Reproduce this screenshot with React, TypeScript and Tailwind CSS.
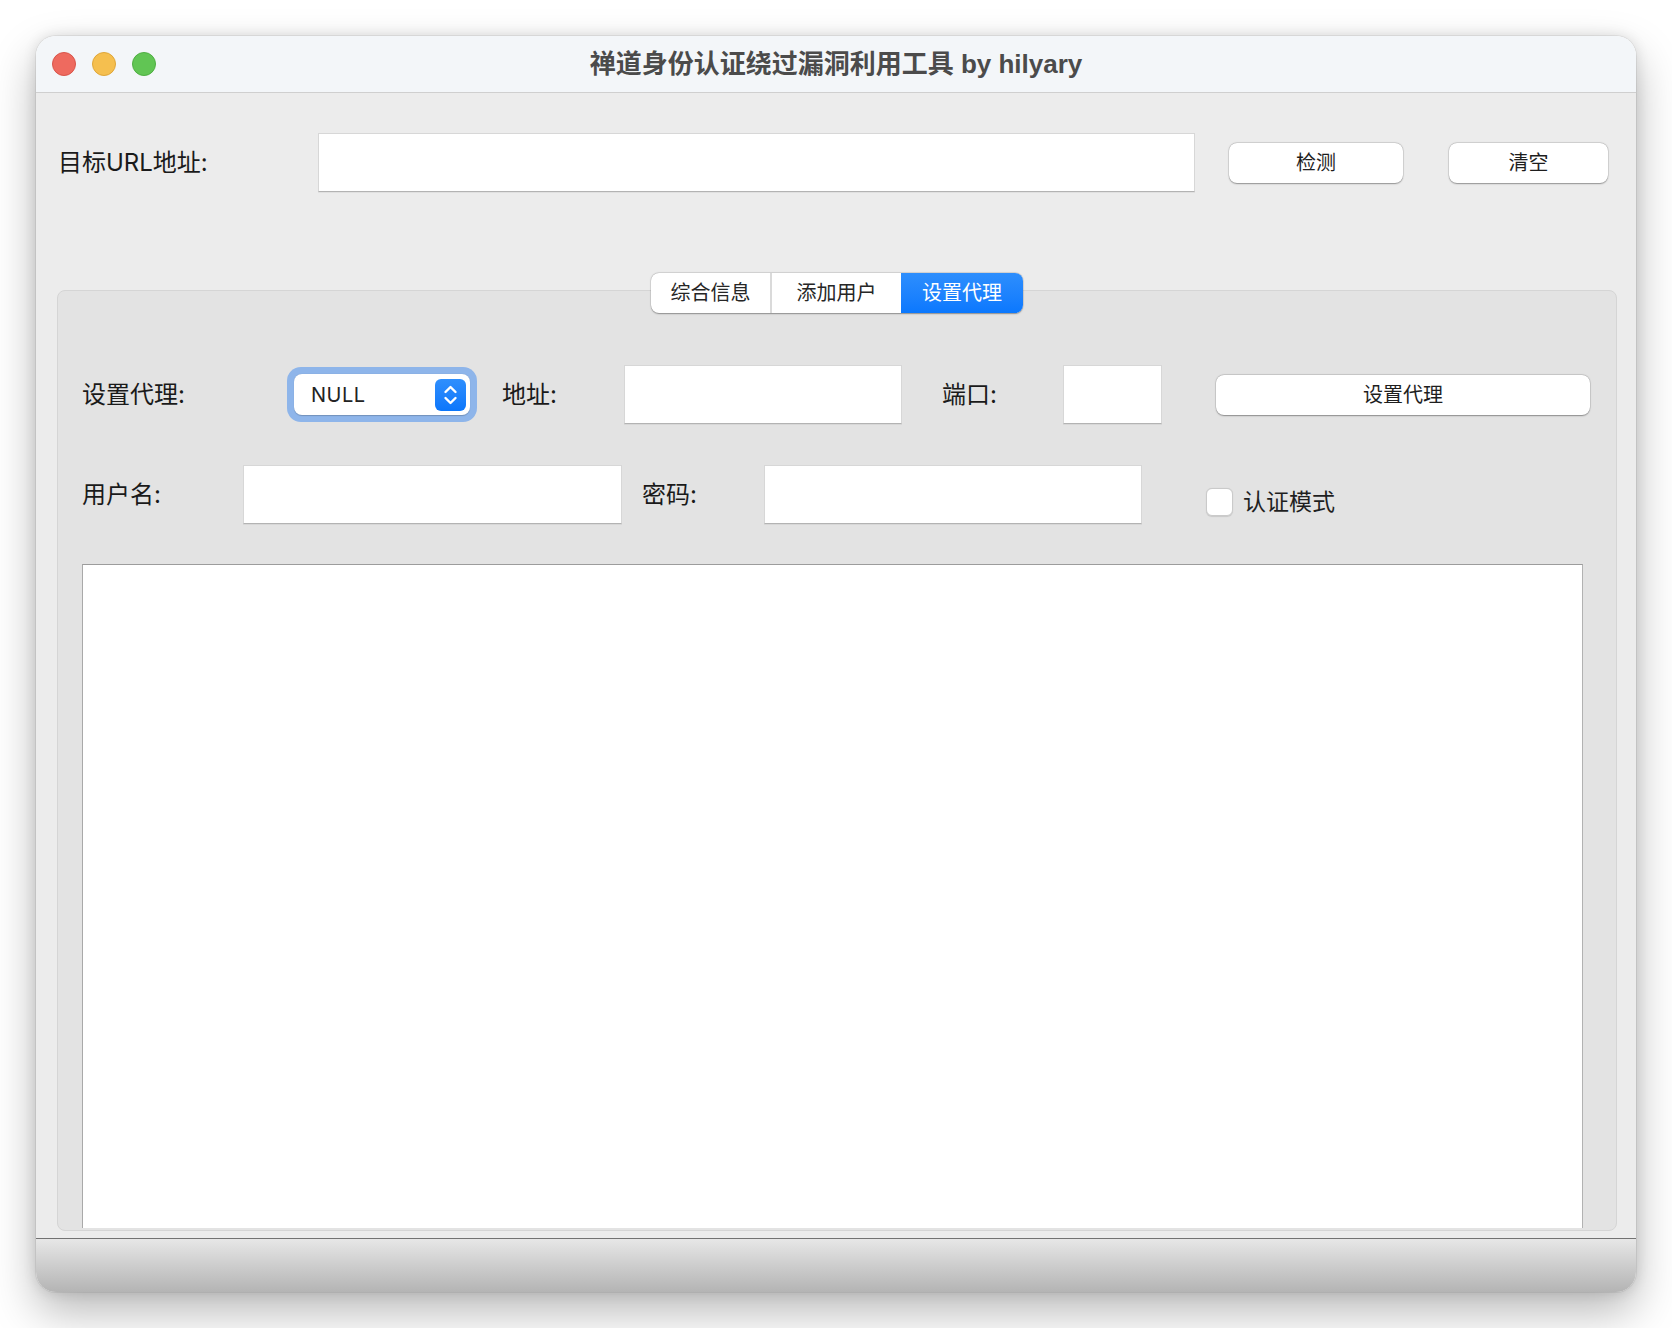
import { useState } from 'react';

const inputCls =
  'bg-white border border-[#d7d7d7] border-b-[#b3b3b3] shadow-[0_1px_0_rgba(0,0,0,0.05)] outline-none px-3 text-[20px] text-[#1d1d1d]';

const buttonCls =
  'h-[40px] rounded-[8px] bg-white text-[20px] text-[#1e1e1e] shadow-[0_0.5px_1.5px_rgba(0,0,0,0.35),0_0_0_0.5px_rgba(0,0,0,0.12)]';

const labelCls = 'text-[24px] text-[#1a1a1a] leading-none whitespace-nowrap';

function TrafficLights() {
  return (
    <div className="flex items-center gap-[16px] pl-[16px]">
      <span className="w-[24px] h-[24px] rounded-full bg-[#ee6a5f] border border-[#d8554b]" />
      <span className="w-[24px] h-[24px] rounded-full bg-[#f5bf4f] border border-[#dea63a]" />
      <span className="w-[24px] h-[24px] rounded-full bg-[#61c554] border border-[#4fae43]" />
    </div>
  );
}

function ProxySelect() {
  return (
    <div className="w-[190px] h-[55px] rounded-[14px] bg-[#8eb5ea] p-[7px] flex">
      <div className="flex-1 rounded-[8px] bg-white flex items-center pl-[17px] pr-[4px] shadow-[0_0.5px_1px_rgba(0,0,0,0.2)]">
        <span className="flex-1 text-[20px] text-[#232323] tracking-[0.5px]">NULL</span>
        <span className="w-[31px] h-[32px] rounded-[6px] bg-gradient-to-b from-[#2f8ffd] to-[#0a76fb] flex items-center justify-center">
          <svg width="31" height="32" viewBox="0 0 31 32" fill="none" stroke="white" strokeWidth="2.4" strokeLinecap="round" strokeLinejoin="round">
            <path d="M10.5 13 L15.5 8 L20.5 13" />
            <path d="M10.5 19 L15.5 24 L20.5 19" />
          </svg>
        </span>
      </div>
    </div>
  );
}

function Tabs() {
  const [active, setActive] = useState(2);
  const names = ['综合信息', '添加用户', '设置代理'];
  return (
    <div className="absolute left-1/2 -translate-x-1/2 top-[-18px] flex h-[40px] rounded-[8px] bg-white shadow-[0_0.5px_1.5px_rgba(0,0,0,0.35),0_0_0_0.5px_rgba(0,0,0,0.1)] overflow-hidden">
      <button
        type="button"
        onClick={() => setActive(0)}
        className={`w-[119px] text-[20px] ${active === 0 ? 'bg-gradient-to-b from-[#2d8efd] to-[#0a78fe] text-white' : 'text-[#262626]'}`}
      >
        {names[0]}
      </button>
      <span className="w-[2px] bg-[#dadada]" />
      <button
        type="button"
        onClick={() => setActive(1)}
        className={`w-[129px] text-[20px] ${active === 1 ? 'bg-gradient-to-b from-[#2d8efd] to-[#0a78fe] text-white' : 'text-[#262626]'}`}
      >
        {names[1]}
      </button>
      <button
        type="button"
        onClick={() => setActive(2)}
        className={`w-[122px] text-[20px] ${active === 2 ? 'bg-gradient-to-b from-[#2d8efd] to-[#0a78fe] text-white' : 'text-[#262626]'}`}
      >
        {names[2]}
      </button>
    </div>
  );
}

export default function App() {
  const [auth, setAuth] = useState(false);

  return (
    <div className="w-[1672px] h-[1328px] bg-white pt-[36px] pl-[36px] font-['Inter','Noto_Sans_CJK_SC',sans-serif]">
      <div className="w-[1600px] h-[1256px] rounded-[20px] overflow-hidden flex flex-col shadow-[0_20px_45px_rgba(0,0,0,0.28),0_0_14px_rgba(0,0,0,0.12),0_0_0_1px_rgba(0,0,0,0.06)]">
        {/* title bar */}
        <div className="h-[57px] shrink-0 bg-[#f3f6f9] border-b border-[#cfcfcf] grid grid-cols-[1fr_auto_1fr] items-center">
          <TrafficLights />
          <h1 className="text-[26px] font-bold text-[#4b4b4b] font-['Liberation_Sans','Noto_Sans_CJK_SC',sans-serif]">
            禅道身份认证绕过漏洞利用工具 by hilyary
          </h1>
          <div />
        </div>

        {/* body */}
        <div className="h-[1145px] shrink-0 bg-[#ececec] pt-[40px] flex flex-col">
          <div className="flex items-center h-[59px] pl-[22px]">
            <span className={`${labelCls} w-[260px]`}>目标URL地址:</span>
            <input className={`${inputCls} w-[877px] h-[59px]`} />
            <button type="button" className={`${buttonCls} w-[174px] ml-[34px]`}>
              检测
            </button>
            <button type="button" className={`${buttonCls} w-[159px] ml-[46px]`}>
              清空
            </button>
          </div>

          <div className="relative ml-[21px] mt-[98px] w-[1560px] h-[941px] rounded-[8px] bg-[#e3e3e3] border border-[#d5d5d5] pt-[74px] pl-[24px]">
            <Tabs />

            <div className="flex items-center h-[59px]">
              <span className={`${labelCls} w-[205px]`}>设置代理:</span>
              <ProxySelect />
              <span className={`${labelCls} w-[122px] ml-[25px]`}>地址:</span>
              <input className={`${inputCls} w-[278px] h-[59px]`} />
              <span className={`${labelCls} w-[121px] ml-[40px]`}>端口:</span>
              <input className={`${inputCls} w-[99px] h-[59px]`} />
              <button type="button" className={`${buttonCls} w-[374px] ml-[54px]`}>
                设置代理
              </button>
            </div>

            <div className="flex items-center h-[59px] mt-[41px]">
              <span className={`${labelCls} w-[161px]`}>用户名:</span>
              <input className={`${inputCls} w-[379px] h-[59px]`} />
              <span className={`${labelCls} w-[122px] ml-[20px]`}>密码:</span>
              <input className={`${inputCls} w-[378px] h-[59px]`} />
              <label className="flex items-center ml-[64px] mt-[15px] cursor-pointer">
                <input
                  type="checkbox"
                  checked={auth}
                  onChange={(e) => setAuth(e.target.checked)}
                  className="appearance-none w-[27px] h-[28px] rounded-[6px] bg-white border border-[#cacaca] shadow-[0_0.5px_1px_rgba(0,0,0,0.12)] checked:bg-[#0a78fe]"
                />
                <span className="ml-[10px] text-[23px] text-[#1f1f1f] leading-none">认证模式</span>
              </label>
            </div>

            <textarea className="block mt-[40px] w-[1501px] h-[664px] bg-white border-t border-l border-r border-t-[#9c9c9c] border-l-[#a9a9a9] border-r-[#b2b2b2] outline-none resize-none p-2 text-[18px]" />
          </div>
        </div>

        {/* bottom bar */}
        <div className="flex-1 border-t border-[#727272] bg-gradient-to-b from-[#e7e7e7] to-[#b4b4b4]" />
      </div>
    </div>
  );
}
